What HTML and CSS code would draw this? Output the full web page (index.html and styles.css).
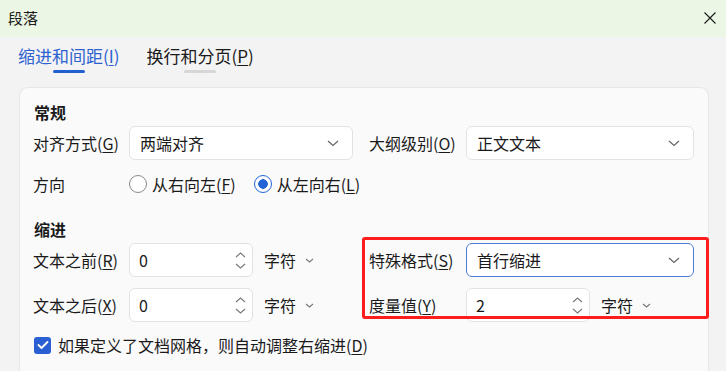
FILE: index.html
```html
<!DOCTYPE html>
<html lang="zh-CN">
<head>
<meta charset="utf-8">
<title>段落</title>
<link rel="stylesheet" href="styles.css">
</head>
<body>
<div class="dialog">
  <div class="titlebar">
    <span class="title">段落</span>
    <svg class="close" width="12" height="12" viewBox="0 0 12 12"><path d="M0.5 0.5 L11.5 11.5 M11.5 0.5 L0.5 11.5" stroke="#1a1a1a" stroke-width="1.1" fill="none"/></svg>
  </div>
  <div class="tabs">
    <div class="tab active"><span class="tab-text">缩进和间距(<u>I</u>)</span><span class="bar"></span></div>
    <div class="tab"><span class="tab-text">换行和分页(<u>P</u>)</span><span class="bar"></span></div>
  </div>
  <div class="card">
    <div class="heading">常规</div>
    <div class="grid">
      <div class="label">对齐方式(<u>G</u>)</div>
      <div class="select"><span>两端对齐</span><svg class="chev" width="12" height="7" viewBox="0 0 12 7"><path d="M1 1 L6 5.5 L11 1" stroke="#666" stroke-width="1.2" fill="none"/></svg></div>
      <div class="label right">大纲级别(<u>O</u>)</div>
      <div class="select"><span>正文文本</span><svg class="chev" width="12" height="7" viewBox="0 0 12 7"><path d="M1 1 L6 5.5 L11 1" stroke="#666" stroke-width="1.2" fill="none"/></svg></div>
    </div>
    <div class="dir-row">
      <div class="label">方向</div>
      <div class="radios">
        <span class="radio"><span class="circle"></span><span>从右向左(<u>F</u>)</span></span>
        <span class="radio"><span class="circle on"></span><span>从左向右(<u>L</u>)</span></span>
      </div>
    </div>
    <div class="heading indent">缩进</div>
    <div class="grid">
      <div class="label">文本之前(<u>R</u>)</div>
      <div class="spinwrap">
        <div class="spin"><span>0</span><span class="arrows"><svg width="11" height="6" viewBox="0 0 11 6"><path d="M1 5 L5.5 1 L10 5" stroke="#777" stroke-width="1.1" fill="none"/></svg><svg width="11" height="6" viewBox="0 0 11 6"><path d="M1 1 L5.5 5 L10 1" stroke="#777" stroke-width="1.1" fill="none"/></svg></span></div>
        <span class="unit"><span>字符</span><svg width="9" height="5" viewBox="0 0 9 5"><path d="M1 1 L4.5 4 L8 1" stroke="#777" stroke-width="1.1" fill="none"/></svg></span>
      </div>
      <div class="label right">特殊格式(<u>S</u>)</div>
      <div class="select focus"><span>首行缩进</span><svg class="chev" width="12" height="7" viewBox="0 0 12 7"><path d="M1 1 L6 5.5 L11 1" stroke="#666" stroke-width="1.2" fill="none"/></svg></div>

      <div class="label">文本之后(<u>X</u>)</div>
      <div class="spinwrap">
        <div class="spin"><span>0</span><span class="arrows"><svg width="11" height="6" viewBox="0 0 11 6"><path d="M1 5 L5.5 1 L10 5" stroke="#777" stroke-width="1.1" fill="none"/></svg><svg width="11" height="6" viewBox="0 0 11 6"><path d="M1 1 L5.5 5 L10 1" stroke="#777" stroke-width="1.1" fill="none"/></svg></span></div>
        <span class="unit"><span>字符</span><svg width="9" height="5" viewBox="0 0 9 5"><path d="M1 1 L4.5 4 L8 1" stroke="#777" stroke-width="1.1" fill="none"/></svg></span>
      </div>
      <div class="label right">度量值(<u>Y</u>)</div>
      <div class="spinwrap">
        <div class="spin"><span>2</span><span class="arrows"><svg width="11" height="6" viewBox="0 0 11 6"><path d="M1 5 L5.5 1 L10 5" stroke="#777" stroke-width="1.1" fill="none"/></svg><svg width="11" height="6" viewBox="0 0 11 6"><path d="M1 1 L5.5 5 L10 1" stroke="#777" stroke-width="1.1" fill="none"/></svg></span></div>
        <span class="unit"><span>字符</span><svg width="9" height="5" viewBox="0 0 9 5"><path d="M1 1 L4.5 4 L8 1" stroke="#777" stroke-width="1.1" fill="none"/></svg></span>
      </div>
    </div>
    <div class="check-row">
      <span class="checkbox"><svg width="12" height="10" viewBox="0 0 12 10"><path d="M1.5 5 L4.5 8 L10.5 2" stroke="#fff" stroke-width="1.8" fill="none" stroke-linecap="round" stroke-linejoin="round"/></svg></span>
      <span>如果定义了文档网格，则自动调整右缩进(<u>D</u>)</span>
    </div>
    <div class="highlight"></div>
  </div>
</div>
</body>
</html>
```

FILE: styles.css
```css
* { box-sizing: border-box; }
html, body { margin: 0; padding: 0; }
body {
  width: 726px;
  height: 371px;
  overflow: hidden;
  background: #f3f3f3;
  font-family: "Noto Sans CJK SC", "Noto Sans", sans-serif;
  font-size: 16px;
  color: #1a1a1a;
}
u { text-decoration-thickness: 1px; text-underline-offset: 2px; }
.dialog { width: 726px; height: 371px; }
.titlebar {
  height: 37px;
  background: #ebf7e4;
  display: flex;
  align-items: center;
  justify-content: space-between;
  padding: 0 10px 0 8px;
}
.title { font-size: 15px; line-height: 20px; margin-top: -2px; }
.close { margin-top: -2px; }
.tabs {
  height: 50px;
  display: flex;
  gap: 27px;
  padding-left: 18px;
  padding-top: 8px;
}
.tab {
  font-size: 17px;
  line-height: 22px;
  height: 30px;
  display: flex;
  flex-direction: column;
  align-items: center;
}
.tab-text { white-space: nowrap; }
.tab .bar {
  display: block;
  width: 32px;
  height: 3px;
  border-radius: 2px;
  background: #d6d6d6;
  margin-top: 3px;
}
.tab.active { color: #2d62d0; }
.tab.active .bar { background: #1f5fcf; }
.card {
  position: relative;
  margin-left: 19px;
  width: 690px;
  height: 300px;
  background: #fafafa;
  border: 1px solid #e6e6e6;
  border-radius: 9px;
  padding: 13px 0 0 13px;
}
.heading {
  font-weight: bold;
  font-size: 16px;
  line-height: 22px;
  height: 25px;
  padding-left: 1px;
}
.heading.indent { margin-top: 10px; }
.grid {
  display: grid;
  grid-template-columns: 96px 224px 113px 228px;
  row-gap: 11px;
  align-items: center;
}
.label { line-height: 22px; white-space: nowrap; }
.label.right { padding-left: 16px; }
.select {
  height: 34px;
  background: #fff;
  border: 1px solid #e2e2e2;
  border-radius: 6px;
  display: flex;
  align-items: center;
  justify-content: space-between;
  padding: 0 13px 0 10px;
}
.select.focus { border-color: #4a7bd9; }
.dir-row {
  display: flex;
  align-items: center;
  height: 48px;
}
.dir-row .label { width: 96px; }
.radios { display: flex; gap: 18px; align-items: center; }
.radio { display: flex; align-items: center; gap: 5px; white-space: nowrap; }
.circle {
  width: 18px; height: 18px;
  border: 1.5px solid #8a8a8a;
  border-radius: 50%;
  background: #fff;
}
.circle.on {
  border-color: #2463d6;
  background: radial-gradient(circle, #2463d6 0 4.5px, #fff 5px);
}
.spinwrap { display: flex; align-items: center; gap: 11px; }
.spin {
  width: 124px;
  height: 34px;
  background: #fff;
  border: 1px solid #e2e2e2;
  border-radius: 6px;
  display: flex;
  align-items: center;
  justify-content: space-between;
  padding: 0 6px 0 9px;
}
.arrows { display: flex; flex-direction: column; gap: 5px; }
.arrows svg { display: block; }
.unit { display: flex; align-items: center; gap: 9px; }
.check-row {
  display: flex;
  align-items: center;
  gap: 7px;
  margin-top: 12px;
  padding-left: 1px;
  line-height: 22px;
}
.checkbox {
  width: 17px; height: 17px;
  background: #2a5fd4;
  border-radius: 3px;
  display: flex;
  align-items: center;
  justify-content: center;
}
.highlight {
  position: absolute;
  left: 342px;
  top: 149px;
  width: 347px;
  height: 82px;
  border: 3px solid #ff1c1c;
  border-radius: 3px;
  pointer-events: none;
}
```
